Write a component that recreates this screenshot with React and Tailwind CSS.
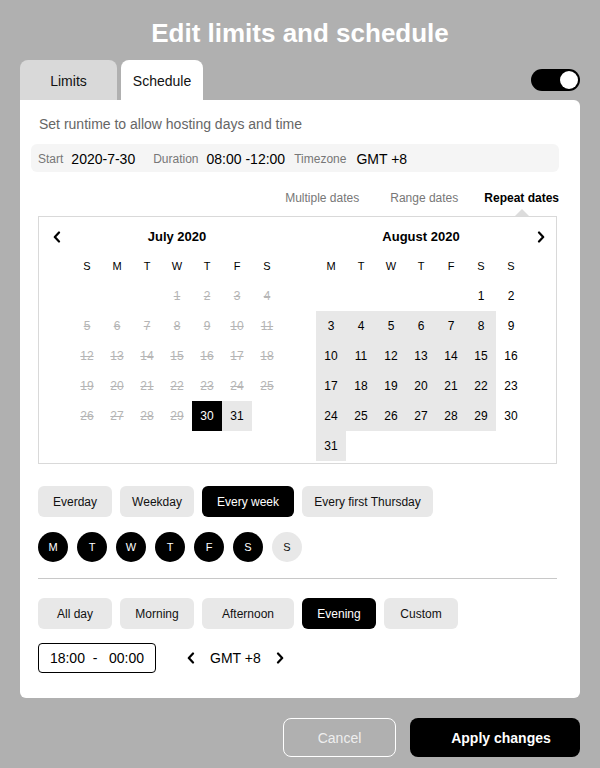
import React from 'react';

const font = { fontFamily: '"Liberation Sans", Arial, sans-serif' };

function Chevron({ dir = 'left' }) {
  return (
    <svg width="10" height="12" viewBox="0 0 10 12" fill="none">
      <path
        d={dir === 'left' ? 'M7 1.5 L2.8 6 L7 10.5' : 'M3 1.5 L7.2 6 L3 10.5'}
        stroke="#000"
        strokeWidth="2.2"
        strokeLinecap="round"
        strokeLinejoin="round"
      />
    </svg>
  );
}

// Month grid of 30px cells, blanks are empty strings
function MonthGrid({ heads, cells }) {
  return (
    <div className="grid w-[210px] grid-cols-7">
      {heads.map((h, i) => (
        <div key={'h' + i} className="flex h-[30px] items-center justify-center text-[11px] text-black">
          {h}
        </div>
      ))}
      {cells.map((c, i) => (
        <div
          key={i}
          className={
            'flex h-[30px] items-center justify-center text-[12px] ' +
            (c.kind === 'past'
              ? 'text-[#b5b5b5] line-through'
              : c.kind === 'sel'
              ? 'bg-black text-white'
              : c.kind === 'range'
              ? 'bg-[#e8e8e8] text-black'
              : 'text-black')
          }
        >
          {c.d}
        </div>
      ))}
    </div>
  );
}

const julyCells = [
  ...Array(3).fill({ d: '' }),
  ...Array.from({ length: 29 }, (_, i) => ({ d: i + 1, kind: 'past' })),
  { d: 30, kind: 'sel' },
  { d: 31, kind: 'range' },
];

const augCells = [
  ...Array(5).fill({ d: '' }),
  ...Array.from({ length: 31 }, (_, i) => {
    const d = i + 1;
    const col = (d + 4) % 7; // 0 = Monday
    const inRange = d >= 3 && col !== 6;
    return { d, kind: inRange ? 'range' : '' };
  }),
];

function Pill({ children, active, w }) {
  return (
    <div
      className={
        'flex h-[31px] items-center justify-center rounded-[6px] text-[12px] ' +
        w +
        (active ? ' bg-black text-white' : ' bg-[#e8e8e8] text-[#111]')
      }
    >
      {children}
    </div>
  );
}

export default function App() {
  const days = ['M', 'T', 'W', 'T', 'F', 'S', 'S'];
  return (
    <div style={font} className="flex h-[768px] w-[600px] flex-col bg-[#b0b0b0]">
      <h1 className="pt-[18px] text-center text-[26px] font-bold leading-[30px] text-white">
        Edit limits and schedule
      </h1>

      {/* tabs */}
      <div className="mt-[12px] flex h-[40px] items-end justify-between px-[20px]">
        <div className="flex h-[40px] gap-[4px]">
          <div className="flex w-[97px] items-center justify-center rounded-t-[8px] bg-[#d9d9d9] pt-[2px] text-[14px] text-[#111]">
            Limits
          </div>
          <div className="flex w-[82px] items-center justify-center rounded-t-[8px] bg-white pt-[2px] text-[14px] text-[#111]">
            Schedule
          </div>
        </div>
        <div className="mb-[9px] flex h-[22px] w-[49px] items-center justify-end rounded-full bg-black pr-[2px]">
          <div className="h-[18px] w-[18px] rounded-full bg-white" />
        </div>
      </div>

      {/* panel */}
      <div className="mx-[20px] h-[598px] rounded-b-[6px] rounded-tr-[6px] bg-white pl-[18px] pr-[23px]">
        <p className="ml-[1px] pt-[16px] text-[14px] leading-[16px] text-[#666]">
          Set runtime to allow hosting days and time
        </p>

        <div className="ml-[-7px] mt-[12px] flex h-[28px] w-[528px] items-center rounded-[6px] bg-[#f5f5f5] px-[7px] pt-[2px]">
          <span className="text-[12px] text-[#777]">Start</span>
          <span className="ml-[8px] text-[14px] text-black">2020-7-30</span>
          <span className="ml-[18px] text-[12px] text-[#777]">Duration</span>
          <span className="ml-[8px] text-[14px] text-black">08:00 -12:00</span>
          <span className="ml-[9px] text-[12px] text-[#777]">Timezone</span>
          <span className="ml-[10px] text-[14px] text-black">GMT +8</span>
        </div>

        <div className="mr-[-2px] mt-[18px] flex h-[16px] items-center justify-end text-[12px]">
          <span className="text-[#777]">Multiple dates</span>
          <span className="ml-[31px] text-[#777]">Range dates</span>
          <span className="ml-[26px] font-bold text-black">Repeat dates</span>
        </div>

        {/* calendar */}
        <div className="relative mt-[10px] h-[248px] w-[519px] border border-[#d9d9d9] pt-[4px]">
          <div className="absolute right-[27px] top-[-8px] h-0 w-0 border-x-[7px] border-b-[7px] border-x-transparent border-b-[#dcdcdc]" />
          <div className="flex h-[30px] items-center pt-[1px]">
            <div className="flex w-[33px] justify-center pl-[2px]">
              <Chevron dir="left" />
            </div>
            <div className="w-[210px] text-center text-[13px] font-bold">July 2020</div>
            <div className="w-[34px]" />
            <div className="w-[210px] text-center text-[13px] font-bold">August 2020</div>
            <div className="flex flex-1 justify-center">
              <Chevron dir="right" />
            </div>
          </div>
          <div className="flex items-start gap-[34px] pl-[33px]">
            <MonthGrid heads={['S', 'M', 'T', 'W', 'T', 'F', 'S']} cells={julyCells} />
            <MonthGrid heads={days} cells={augCells} />
          </div>
        </div>

        <div className="mt-[22px] flex gap-[8px]">
          <Pill w="w-[74px]">Everday</Pill>
          <Pill w="w-[74px]">Weekday</Pill>
          <Pill w="w-[92px]" active>Every week</Pill>
          <Pill w="w-[131px]">Every first Thursday</Pill>
        </div>

        <div className="mt-[15px] flex gap-[9px]">
          {days.map((d, i) => (
            <div
              key={i}
              className={
                'flex h-[30px] w-[30px] items-center justify-center rounded-full text-[11px] ' +
                (i < 6 ? 'bg-black text-white' : 'bg-[#e8e8e8] text-[#111]')
              }
            >
              {d}
            </div>
          ))}
        </div>

        <div className="mt-[16px] h-px w-[519px] bg-[#c8c8c8]" />

        <div className="mt-[19px] flex gap-[8px]">
          <Pill w="w-[74px]">All day</Pill>
          <Pill w="w-[74px]">Morning</Pill>
          <Pill w="w-[92px]">Afternoon</Pill>
          <Pill w="w-[74px]" active>Evening</Pill>
          <Pill w="w-[74px]">Custom</Pill>
        </div>

        <div className="mt-[14px] flex items-center">
          <div className="flex h-[30px] w-[118px] items-center justify-center rounded-[4px] border border-black text-[14px] text-black">
            18:00&nbsp;&nbsp;-&nbsp;&nbsp;&nbsp;00:00
          </div>
          <div className="ml-[30px] flex items-center gap-[14px] text-[14px] text-black">
            <Chevron dir="left" />
            <span>GMT +8</span>
            <Chevron dir="right" />
          </div>
        </div>
      </div>

      {/* footer */}
      <div className="mt-[20px] flex justify-end gap-[14px] pr-[20px]">
        <button className="h-[39px] w-[113px] rounded-[8px] border border-white pt-[2px] text-[14px] text-[#eee]">
          Cancel
        </button>
        <button className="h-[39px] w-[170px] rounded-[8px] bg-black pl-[12px] pt-[2px] text-[14px] font-bold text-white">
          Apply changes
        </button>
      </div>
    </div>
  );
}
